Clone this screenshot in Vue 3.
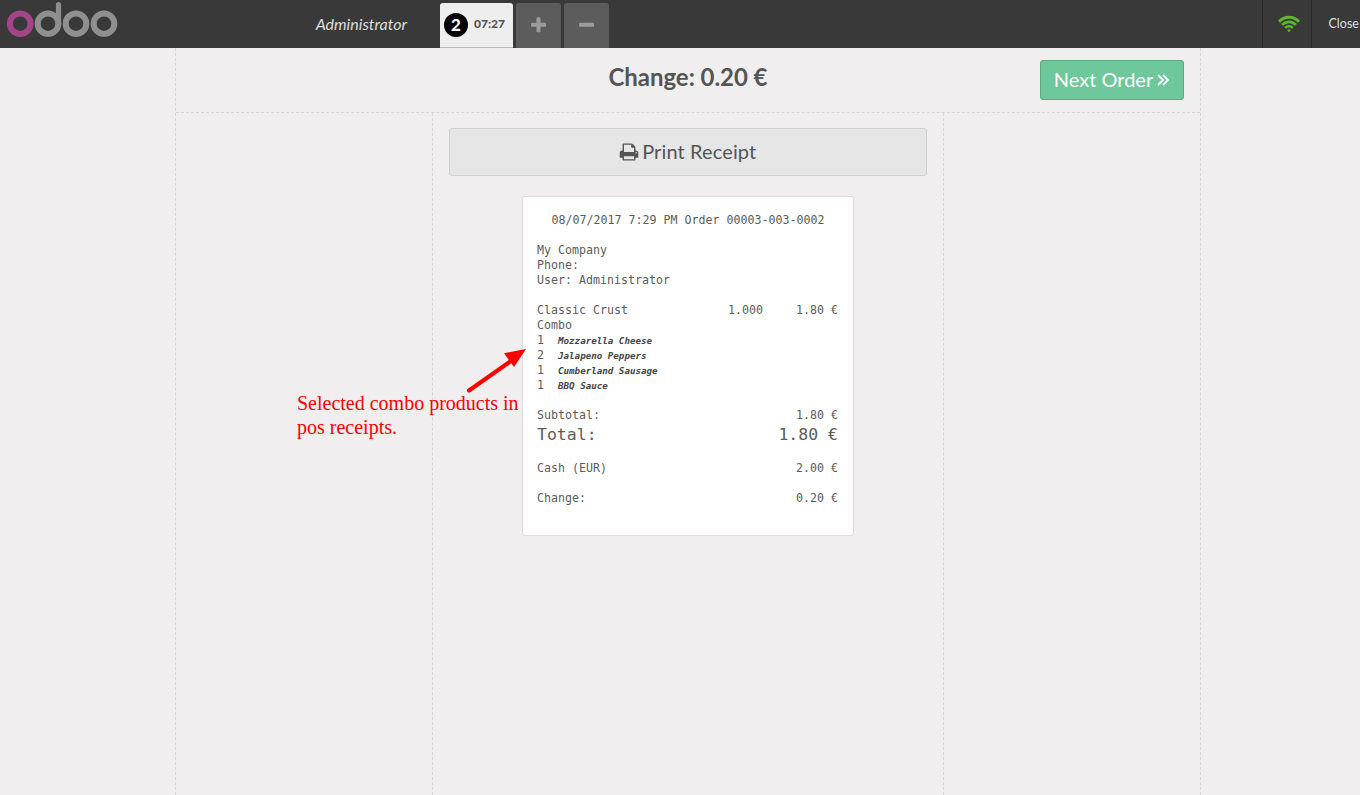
<script setup>
const combo = [
  { qty: 1, name: 'Mozzarella Cheese' },
  { qty: 2, name: 'Jalapeno Peppers' },
  { qty: 1, name: 'Cumberland Sausage' },
  { qty: 1, name: 'BBQ Sauce' },
]
</script>

<template>
  <div class="pos">
    <header class="topbar">
      <div class="branding">
        <svg class="logo" width="120" height="48" viewBox="0 0 120 48" fill="none" stroke-width="6">
          <g stroke="#8f8f8f">
            <circle cx="48" cy="23.7" r="10.3" />
            <circle cx="76" cy="23.7" r="10.3" />
            <circle cx="104" cy="23.7" r="10.3" />
            <path d="M58.5 23.7V4.6" stroke-width="5.2" stroke-linecap="round" />
          </g>
          <circle cx="20.2" cy="23.7" r="10.3" stroke="#a24689" />
        </svg>
        <span class="username">Administrator</span>
      </div>
      <nav class="orders">
        <div class="order selected"><span class="seq">2</span><span class="time">07:27</span></div>
        <button class="order square">
          <svg width="19" height="19" viewBox="0 0 1792 1792"><path d="M1600 736v192q0 40-28 68t-68 28h-416v416q0 40-28 68t-68 28h-192q-40 0-68-28t-28-68v-416h-416q-40 0-68-28t-28-68v-192q0-40 28-68t68-28h416v-416q0-40 28-68t68-28h192q40 0 68 28t28 68v416h416q40 0 68 28t28 68z" /></svg>
        </button>
        <button class="order square">
          <svg width="19" height="19" viewBox="0 0 1792 1792"><path d="M1600 736v192q0 40-28 68t-68 28h-1216q-40 0-68-28t-28-68v-192q0-40 28-68t68-28h1216q40 0 68 28t28 68z" /></svg>
        </button>
      </nav>
      <div class="status">
        <div class="wifi">
          <svg width="24" height="18" viewBox="0 0 24 18" fill="none" stroke="#5db82d" stroke-width="2.9">
            <path d="M2 6.7A13.6 13.6 0 0 1 22 6.7" />
            <path d="M5.1 9.9A9.3 9.3 0 0 1 18.9 9.9" stroke-width="2.7" />
            <path d="M8.1 12.9A5.3 5.3 0 0 1 15.9 12.9" stroke-width="2.5" />
            <path d="M10.1 15Q12 13.4 13.9 15L12 17.3Z" fill="#5db82d" stroke="none" />
          </svg>
        </div>
        <div class="close">Close</div>
      </div>
    </header>

    <main class="screen">
      <div class="top-content">
        <h1>Change: 0.20 €</h1>
        <button class="next">
          <span>Next Order</span>
          <svg width="12" height="12" viewBox="0 0 12 12" fill="none" stroke="#fff" stroke-width="1.8"><path d="M1 1l5 5-5 5M6 1l5 5-5 5" /></svg>
        </button>
      </div>
      <div class="columns">
        <div class="center">
          <button class="print">
            <svg width="20" height="20" viewBox="0 0 1792 1792"><path d="M448 1536h896v-256h-896v256zm0-640h896v-384h-160q-40 0-68-28t-28-68v-160h-640v640zm1152 64q0-26-19-45t-45-19-45 19-19 45 19 45 45 19 45-19 19-45zm128 0v416q0 13-9.5 22.5t-22.5 9.5h-224v160q0 40-28 68t-68 28h-960q-40 0-68-28t-28-68v-160h-224q-13 0-22.5-9.5t-9.5-22.5v-416q0-79 56.5-135.5t135.5-56.5h64v-544q0-40 28-68t68-28h672q40 0 88 20t76 48l152 152q28 28 48 76t20 88v256h64q79 0 135.5 56.5t56.5 135.5z" /></svg>
            <span>Print Receipt</span>
          </button>
          <section class="ticket">
            <div class="head">08/07/2017 7:29 PM Order 00003-003-0002</div>
            <div class="block">
              <div>My Company</div>
              <div>Phone:</div>
              <div>User: Administrator</div>
            </div>
            <div class="block">
              <div class="line"><span class="product">Classic Crust Combo</span><span class="qty">1.000</span><span class="price">1.80 €</span></div>
              <div v-for="item in combo" :key="item.name" class="combo"><span class="count">{{ item.qty }}</span><span class="name">{{ item.name }}</span></div>
            </div>
            <div class="block">
              <div class="row"><span>Subtotal:</span><span>1.80 €</span></div>
              <div class="row total"><span>Total:</span><span>1.80 €</span></div>
            </div>
            <div class="block row"><span>Cash (EUR)</span><span>2.00 €</span></div>
            <div class="block row"><span>Change:</span><span>0.20 €</span></div>
          </section>
        </div>
      </div>
    </main>

    <div class="note">Selected combo products in<br />pos receipts.</div>
    <svg class="arrow" width="64" height="50" viewBox="0 0 64 50">
      <path d="M4 42.5L46 13" stroke="#f00" stroke-width="4" stroke-linecap="round" />
      <path d="M61 1L39 5.2L49 19Z" fill="#f00" />
    </svg>
  </div>
</template>

<style>
body { background: #f0eeee; }
</style>

<style scoped>
* { box-sizing: border-box; }
.pos {
  position: relative;
  display: flex;
  flex-direction: column;
  height: 795px;
  overflow: hidden;
  background: #f0eeee;
  color: #555;
  font-family: Lato, sans-serif;
}
button { font-family: inherit; padding: 0; border: 0; color: inherit; }
.topbar { display: flex; height: 48px; flex: none; background: #393939; }
.branding { display: flex; width: 440px; justify-content: space-between; padding-right: 33px; }
.username { font-size: 16px; font-style: italic; line-height: 47px; color: #ddd; }
.orders { display: flex; gap: 3px; padding-top: 3px; flex: 1; }
.order { display: flex; align-items: center; border-radius: 3px 3px 0 0; }
.selected { width: 73px; padding-left: 4px; background: #eee; border-bottom: 1px solid #bbb; }
.seq {
  width: 24px; height: 24px; margin-right: 6px; border-radius: 12px;
  background: #000; color: #fff; font-size: 17px; font-weight: 900; line-height: 24px; text-align: center;
}
.time { font-size: 12px; font-weight: 900; line-height: 16px; padding-bottom: 2px; }
.square { width: 45px; justify-content: center; background: #5c5c5c; }
.square svg { fill: #9b9b9b; }
.status { display: flex; width: 98px; color: #ddd; }
.wifi { display: flex; width: 49px; border-left: 1px solid #292929; padding: 15px 0 0 14.3px; }
.close { flex: 1; border-left: 1px solid #292929; padding-left: 16.5px; font-size: 12.5px; line-height: 48px; white-space: nowrap; }
.screen {
  display: flex; flex-direction: column; flex: 1;
  width: 1026px; margin-left: 175px;
  border: 1px dashed #d6d4d4; border-width: 0 1px;
}
.top-content { display: grid; grid-template-columns: 1fr auto 1fr; height: 65px; border-bottom: 1px dashed #d6d4d4; }
h1 { grid-column: 2; margin: 0; font-size: 24px; font-weight: 700; line-height: 58px; letter-spacing: -0.05px; }
.next {
  justify-self: end; width: 144px; height: 40px; margin: 12px 16px 0 0; padding-right: 1px;
  display: flex; align-items: center; justify-content: center; gap: 4px;
  border: 1px solid #5ea984; border-radius: 3px; background: #6ec89b; color: #fff; font-size: 20px;
}
.next span, .print span { padding-bottom: 2px; }
.columns { display: flex; justify-content: center; flex: 1; }
.center { width: 512px; padding: 15px 16px 0; border: 1px dashed #d6d4d4; border-width: 0 1px; }
.print {
  display: flex; align-items: center; justify-content: center; gap: 3.5px; padding-right: 1px;
  width: 478px; height: 48px; border: 1px solid #cfcfcf; border-radius: 3px; background: #e6e6e6; font-size: 20px;
}
.print span { letter-spacing: 0.12px; }
.print svg { fill: #555; }
.ticket {
  width: 332px; height: 340px; margin: 20px auto 0; padding: 16px 14px 0;
  border: 1px solid #dcdcdc; border-radius: 3px; background: #fff; color: #5c5c5c;
  font-family: "DejaVu Sans Mono", monospace; font-size: 11.63px; line-height: 15px; white-space: nowrap;
}
.head { text-align: center; }
.block { margin-top: 15px; }
.line { display: flex; align-items: flex-start; }
.product { width: 151px; padding-right: 24px; white-space: normal; }
.qty { width: 75px; text-align: right; }
.price { flex: 1; text-align: right; }
.row { display: flex; justify-content: space-between; }
.line, .row { padding-right: 1px; }
.total { font-size: 16.5px; line-height: 23px; }
.combo { display: flex; }
.count { width: 21px; }
.name { font-size: 9.2px; font-weight: 700; font-style: italic; color: #444; }
.note {
  position: absolute; left: 297px; top: 391px;
  color: #f00; font-family: "Liberation Serif", serif; font-size: 20px; line-height: 24px; white-space: nowrap;
}
.arrow { position: absolute; left: 465px; top: 348px; }
</style>
